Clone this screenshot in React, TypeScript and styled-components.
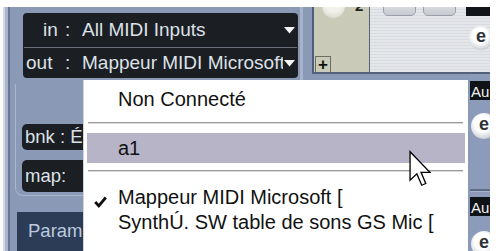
import React from 'react';
import styled, { createGlobalStyle } from 'styled-components';

const Global = createGlobalStyle`
  html, body { margin: 0; padding: 0; background: #fff; }
  body { font-family: "Liberation Sans", Arial, sans-serif; }
`;

const Screen = styled.div`
  position: relative;
  width: 498px;
  height: 251px;
  overflow: hidden;
  background: #fff;
  display: flex;
  flex-direction: column;
`;

const TopBand = styled.div`
  height: 7px;
  flex: none;
  background: #fff;
`;

const Body = styled.div`
  flex: 1;
  display: flex;
  min-height: 0;
`;

const EdgeStrip = styled.div`
  width: 10px;
  flex: none;
  background: linear-gradient(to right, #fbfbfc 0 3px, #d5d9e1 3px 5px, #aab3c8 5px 8px, #66769a 8px 10px);
`;

const LeftPanel = styled.div`
  width: 290px;
  flex: none;
  background: #8a99b6;
  display: flex;
  flex-direction: column;
  padding-top: 6px;
  box-sizing: border-box;
`;

const Ridge = styled.div`
  width: 3px;
  flex: none;
  background: #a7b3ca;
`;

const Gutter = styled.div`
  width: 9px;
  flex: none;
  background: #8a99b6;
`;

const RightSection = styled.div`
  width: 178px;
  flex: none;
  display: flex;
  flex-direction: column;
`;

const WhiteEdge = styled.div`
  flex: 1;
  background: #fff;
`;

/* ---------- left panel ---------- */

const IOBox = styled.div`
  margin-left: 13px;
  width: 275px;
  height: 65px;
  flex: none;
  background: #1b1f24;
  border-radius: 4px;
  display: flex;
  flex-direction: column;
  color: #dde1e8;
  font-size: 19px;
`;

const IORow = styled.div<{ $h: number }>`
  height: ${(p) => p.$h}px;
  display: flex;
  align-items: center;
  padding-right: 3px;
  white-space: nowrap;
`;

const IODivider = styled.div`
  height: 1px;
  margin: 0 1px;
  background: #6a7079;
  flex: none;
`;

const IOLabel = styled.div<{ $indent: number }>`
  width: 42px;
  flex: none;
  box-sizing: border-box;
  padding-left: ${(p) => p.$indent}px;
`;

const Colon = styled.span`
  width: 17px;
  flex: none;
`;

const IOValue = styled.div`
  flex: 1;
  overflow: hidden;
`;

const DropArrow = styled.svg`
  flex: none;
  margin-left: 1px;
`;

const InnerPanel = styled.div`
  margin: 6px 0 0 5px;
  border-left: 1px solid #a9b5cb;
  border-bottom: 1px solid #a9b5cb;
  border-bottom-left-radius: 8px;
  padding: 40px 0 3px 6px;
  display: flex;
  flex-direction: column;
  gap: 10px;
  flex: none;
`;

const SmallBox = styled.div<{ $h: number }>`
  width: 90px;
  height: ${(p) => p.$h}px;
  background: #1b1f24;
  border-radius: 5px;
  color: #dde1e8;
  font-size: 18.5px;
  display: flex;
  align-items: center;
  padding-left: 3px;
  white-space: nowrap;
`;

const ParamBox = styled.div`
  margin: 16px 0 0 7px;
  width: 120px;
  height: 45px;
  flex: none;
  background: #2c3c57;
  color: #bccadf;
  font-size: 18.5px;
  padding: 8px 0 0 11px;
  box-sizing: border-box;
`;

/* ---------- right section ---------- */

const TopSection = styled.div`
  height: 67px;
  flex: none;
  display: flex;
  border-bottom: 2px solid #55617a;
  box-sizing: border-box;
`;

const BeigeCol = styled.div`
  width: 58px;
  flex: none;
  box-sizing: border-box;
  border-left: 2px solid #4e5d7c;
  border-right: 1px solid #5a6272;
  background: #c9cab7;
  display: flex;
  flex-direction: column;
  justify-content: space-between;
  overflow: hidden;
`;

const KnobRow = styled.div`
  display: flex;
  align-items: flex-start;
  margin-top: -12px;
  padding-left: 8px;
`;

const Knob = styled.div`
  width: 23px;
  height: 23px;
  border-radius: 50%;
  background: radial-gradient(circle at 50% 35%, #f2f2ec 0 45%, #dedfd4 75%, #c2c3b4 100%);
`;

const KnobNum = styled.div`
  margin: 2px 0 0 10px;
  font-size: 15px;
  font-weight: bold;
  color: #222;
`;

const PlusBox = styled.div`
  width: 16px;
  height: 16px;
  margin-left: 1px;
  border: 1px solid #6c6d60;
  border-bottom: none;
  box-sizing: border-box;
  display: flex;
  align-items: center;
  justify-content: center;
  font-size: 17px;
  font-weight: bold;
  color: #111;
  line-height: 1;
`;

const GreyCol = styled.div`
  flex: 1;
  overflow: hidden;
  background: repeating-linear-gradient(to bottom, #e4e6ea 0 2px, #d8dbe0 2px 3px);
  display: flex;
  flex-direction: column;
`;

const ButtonRow = styled.div`
  display: flex;
  align-items: flex-start;
  margin-top: -11px;
  padding-left: 13px;
  gap: 7px;
`;

const SoloButton = styled.div`
  width: 35px;
  height: 20px;
  box-sizing: border-box;
  border: 1px solid #9ba0a8;
  border-radius: 5px;
  background: linear-gradient(#eceef0, #c6c9ce);
  display: flex;
  justify-content: center;
  font-size: 15px;
  font-weight: bold;
  color: #222;
  line-height: 10px;
  overflow: hidden;
`;

const MiniLabel = styled.div`
  margin-left: 3px;
  width: 24px;
  height: 20px;
  background: #111418;
  color: #f2f2f2;
  font-size: 13px;
  font-weight: bold;
  line-height: 12px;
  padding-left: 1px;
  overflow: hidden;
`;

const EButton = styled.div<{ $size: number }>`
  width: ${(p) => p.$size}px;
  height: ${(p) => p.$size}px;
  flex: none;
  border-radius: 50%;
  background: radial-gradient(circle at 45% 40%, #ffffff 0 38%, #dcdfe4 62%, #9ca2ad 100%);
  display: flex;
  align-items: center;
  justify-content: center;
  font-size: 18px;
  font-weight: bold;
  color: #2e3238;
  box-sizing: border-box;
  padding-bottom: 3px;
`;

const GreyE = styled(EButton)`
  margin: 10px 0 0 99px;
`;

const LowerArea = styled.div`
  flex: 1;
  display: flex;
  background: #8a99b6;
`;

const Filler = styled.div`
  flex: 1;
`;

const RightStrip = styled.div`
  width: 20px;
  flex: none;
  overflow: hidden;
  background: #8b9bb9;
  display: flex;
  flex-direction: column;
`;

const AuLabel = styled.div<{ $mt: number }>`
  margin-top: ${(p) => p.$mt}px;
  height: 19px;
  flex: none;
  background: #0f1216;
  color: #f0f0f0;
  font-size: 15px;
  padding-left: 1px;
  line-height: 21px;
  white-space: nowrap;
`;

const StripE = styled(EButton)<{ $mt: number }>`
  margin-top: ${(p) => p.$mt}px;
  margin-left: 1px;
`;

const StripLine = styled.div<{ $mt: number }>`
  margin-top: ${(p) => p.$mt}px;
  height: 3px;
  flex: none;
  background: linear-gradient(#5d6b89 0 2px, #a6b2c9 2px 3px);
`;

/* ---------- menu ---------- */

const Menu = styled.div`
  position: absolute;
  left: 84px;
  top: 80px;
  width: 384px;
  height: 180px;
  background: #fff;
  display: flex;
  flex-direction: column;
  padding-top: 6px;
  box-sizing: border-box;
  box-shadow: -1px 0 0 #cfd3dc;
`;

const MenuItem = styled.div<{ $h: number; $active?: boolean }>`
  height: ${(p) => p.$h}px;
  flex: none;
  margin: 0 3px;
  display: flex;
  align-items: center;
  background: ${(p) => (p.$active ? '#b8b4c8' : 'transparent')};
  font-size: 20px;
  color: #111;
  white-space: nowrap;
`;

const CheckSlot = styled.div`
  width: 31px;
  flex: none;
  display: flex;
  padding: 8px 0 0 7px;
  box-sizing: border-box;
`;

const Separator = styled.div<{ $mt: number; $mb: number }>`
  flex: none;
  height: 2px;
  margin: ${(p) => p.$mt}px 5px ${(p) => p.$mb}px 4px;
  background: linear-gradient(#9c9c9c 0 1px, #d8d8d8 1px 2px);
`;

const Cursor = styled.svg`
  position: absolute;
  left: 409px;
  top: 150px;
`;

const Arrow = () => (
  <DropArrow width="11" height="7" viewBox="0 0 11 7">
    <path d="M0 0 H11 L5.5 6.5 Z" fill="#f4f4f4" />
  </DropArrow>
);

const Check = () => (
  <svg width="13" height="12" viewBox="0 0 13 12">
    <path d="M1.2 6 L4.8 9.8 L11.8 1.5" fill="none" stroke="#111" strokeWidth="2.8" />
  </svg>
);

export default function App() {
  return (
    <>
      <Global />
      <Screen>
        <TopBand />
        <Body>
          <EdgeStrip />
          <LeftPanel>
            <IOBox>
              <IORow $h={34}>
                <IOLabel $indent={20}>in</IOLabel>
                <Colon>:</Colon>
                <IOValue>All MIDI Inputs</IOValue>
                <Arrow />
              </IORow>
              <IODivider />
              <IORow $h={30}>
                <IOLabel $indent={3}>out</IOLabel>
                <Colon>:</Colon>
                <IOValue>Mappeur MIDI Microsoft</IOValue>
                <Arrow />
              </IORow>
            </IOBox>
            <InnerPanel>
              <SmallBox $h={26}>bnk : É</SmallBox>
              <SmallBox $h={32}>map:</SmallBox>
            </InnerPanel>
            <ParamBox>Param</ParamBox>
          </LeftPanel>
          <Ridge />
          <Gutter />
          <RightSection>
            <TopSection>
              <BeigeCol>
                <KnobRow>
                  <Knob />
                  <KnobNum>2</KnobNum>
                </KnobRow>
                <PlusBox>+</PlusBox>
              </BeigeCol>
              <GreyCol>
                <ButtonRow>
                  <SoloButton>m</SoloButton>
                  <SoloButton>s</SoloButton>
                  <MiniLabel>mi</MiniLabel>
                </ButtonRow>
                <GreyE $size={24}>e</GreyE>
              </GreyCol>
            </TopSection>
            <LowerArea>
              <Filler />
              <RightStrip>
                <AuLabel $mt={7}>Au</AuLabel>
                <StripE $size={26} $mt={13}>e</StripE>
                <StripLine $mt={50} />
                <AuLabel $mt={5}>Au</AuLabel>
                <StripE $size={26} $mt={15}>e</StripE>
              </RightStrip>
            </LowerArea>
          </RightSection>
          <WhiteEdge />
        </Body>

        <Menu>
          <MenuItem $h={26}>
            <CheckSlot />
            Non Connecté
          </MenuItem>
          <Separator $mt={10} $mb={9} />
          <MenuItem $h={30} $active>
            <CheckSlot />
            a1
          </MenuItem>
          <Separator $mt={7} $mb={13} />
          <MenuItem $h={25}>
            <CheckSlot>
              <Check />
            </CheckSlot>
            Mappeur MIDI Microsoft [
          </MenuItem>
          <MenuItem $h={25}>
            <CheckSlot />
            SynthÚ. SW table de sons GS Mic [
          </MenuItem>
        </Menu>

        <Cursor width="22" height="38" viewBox="0 0 12.6 21">
          <path
            d="M0.6 0.6 L0.6 17 L4.5 13.3 L7.3 19.8 L9.6 18.8 L6.9 12.4 L12 12.4 Z"
            fill="#fff"
            stroke="#000"
            strokeWidth="0.75"
            strokeLinejoin="miter"
          />
        </Cursor>
      </Screen>
    </>
  );
}
